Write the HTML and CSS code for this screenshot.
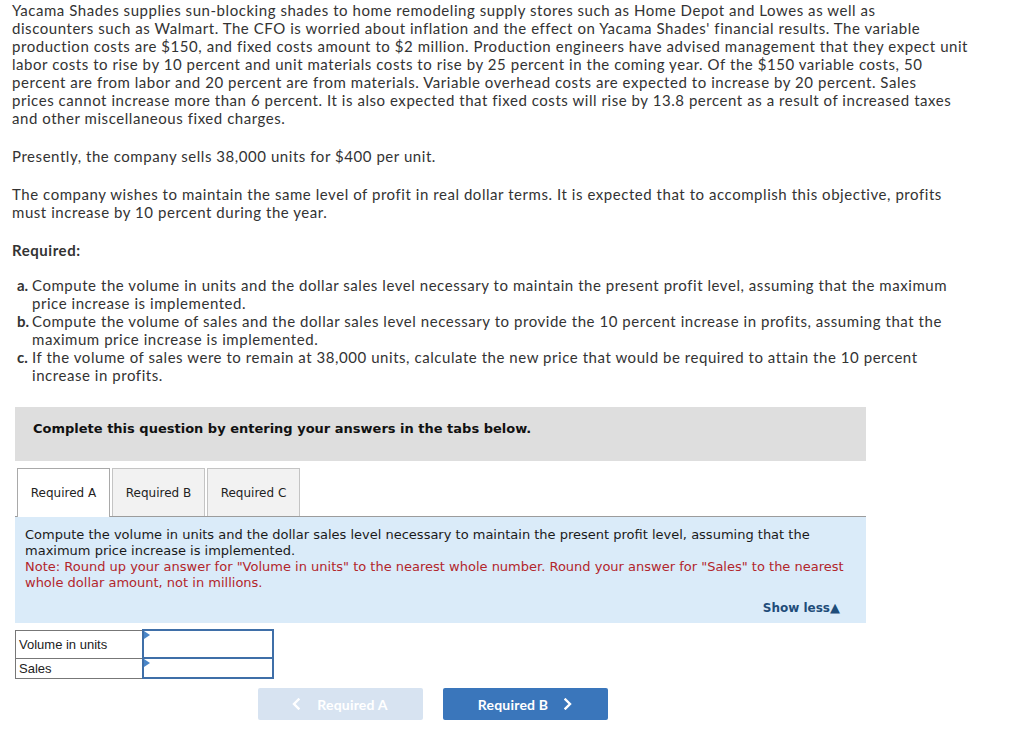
FILE: index.html
```html
<!DOCTYPE html>
<html>
<head>
<meta charset="utf-8">
<link rel="stylesheet" href="styles.css">
</head>
<body>
<div class="page">
  <div class="question">
    <p>Yacama Shades supplies sun-blocking shades to home remodeling supply stores such as Home Depot and Lowes as well as<br>
    discounters such as Walmart. The CFO is worried about inflation and the effect on Yacama Shades' financial results. The variable<br>
    production costs are $150, and fixed costs amount to $2 million. Production engineers have advised management that they expect unit<br>
    labor costs to rise by 10 percent and unit materials costs to rise by 25 percent in the coming year. Of the $150 variable costs, 50<br>
    percent are from labor and 20 percent are from materials. Variable overhead costs are expected to increase by 20 percent. Sales<br>
    prices cannot increase more than 6 percent. It is also expected that fixed costs will rise by 13.8 percent as a result of increased taxes<br>
    and other miscellaneous fixed charges.</p>
    <p>Presently, the company sells 38,000 units for $400 per unit.</p>
    <p>The company wishes to maintain the same level of profit in real dollar terms. It is expected that to accomplish this objective, profits must increase by 10 percent during the year.</p>
    <p class="req-title">Required:</p>
    <ol class="req-list">
      <li><b>a.</b>Compute the volume in units and the dollar sales level necessary to maintain the present profit level, assuming that the maximum price increase is implemented.</li>
      <li><b>b.</b>Compute the volume of sales and the dollar sales level necessary to provide the 10 percent increase in profits, assuming that the maximum price increase is implemented.</li>
      <li><b>c.</b>If the volume of sales were to remain at 38,000 units, calculate the new price that would be required to attain the 10 percent increase in profits.</li>
    </ol>
  </div>

  <div class="work">
    <div class="banner">Complete this question by entering your answers in the tabs below.</div>
    <div class="tabs">
      <div class="tab active">Required A</div>
      <div class="tab">Required B</div>
      <div class="tab">Required C</div>
    </div>
    <div class="panel">
      <div class="instr">Compute the volume in units and the dollar sales level necessary to maintain the present profit level, assuming that the maximum price increase is implemented.</div>
      <div class="note">Note: Round up your answer for "Volume in units" to the nearest whole number. Round your answer for "Sales" to the nearest whole dollar amount, not in millions.</div>
      <div class="showless">Show less<span class="tri">&#9650;</span></div>
    </div>
    <table class="answers">
      <tr class="row1"><td class="label">Volume in units</td><td class="input"><span class="flag"></span></td></tr>
      <tr class="row2"><td class="label">Sales</td><td class="input"><span class="flag"></span></td></tr>
    </table>
    <div class="nav">
      <div class="btn prev"><svg class="chev" width="8" height="12" viewBox="0 0 8 12"><polyline points="6.5,1.5 2,6 6.5,10.5" fill="none" stroke="#fff" stroke-width="2.4" stroke-linecap="square"/></svg>Required A</div>
      <div class="btn next">Required B<svg class="chev" width="8" height="12" viewBox="0 0 8 12"><polyline points="1.5,1.5 6,6 1.5,10.5" fill="none" stroke="#fff" stroke-width="2.4" stroke-linecap="square"/></svg></div>
    </div>
  </div>
</div>
</body>
</html>
```

FILE: styles.css
```css
html, body {
  margin: 0;
  padding: 0;
  background: #fff;
}

.page {
  width: 1020px;
}

.question {
  padding: 1px 0 0 12px;
  width: 945px;
  font-family: Lato, "Open Sans", sans-serif;
  font-size: 15px;
  letter-spacing: 0.55px;
  line-height: 18px;
  color: #333;
}

.question p {
  margin: 0 0 20px 0;
}

.question p:first-child {
  width: 985px;
  white-space: nowrap;
}

.question p.req-title {
  font-weight: 700;
  margin-bottom: 17px;
}

.req-list {
  list-style: none;
  margin: 0;
  padding: 0 0 0 20px;
}

.req-list li {
  text-indent: -15px;
}

.req-list b {
  display: inline-block;
  width: 15px;
  text-indent: 0;
  font-weight: 700;
  letter-spacing: 0;
}

.work {
  margin: 23px 0 0 15px;
  width: 851px;
}

.banner {
  background: #dedede;
  height: 54px;
  box-sizing: border-box;
  padding: 14px 18px 0 18px;
  font-family: "DejaVu Sans", Verdana, sans-serif;
  font-weight: 700;
  font-size: 13px;
  line-height: 16px;
  color: #111;
}

.tabs {
  display: flex;
  gap: 2px;
  margin: 7px 0 0 2px;
  position: relative;
  z-index: 1;
}

.tab {
  width: 93px;
  height: 48px;
  box-sizing: border-box;
  border: 1px solid #c4c4c4;
  border-bottom: none;
  background: #f2f2f2;
  font-family: "DejaVu Sans", Verdana, sans-serif;
  font-size: 12px;
  line-height: 48px;
  text-align: center;
  color: #222;
}

.tab.active {
  background: #fff;
  border-color: #a9a9a9;
  height: 49px;
}

.panel {
  background: #daebf9;
  border-top: 1px solid #9c9c9c;
  margin-top: -1px;
  padding: 10px 10px 7px 10px;
  font-family: "DejaVu Sans", Verdana, sans-serif;
  font-size: 13px;
  line-height: 16px;
  color: #1a1a1a;
}

.note {
  color: #b2262c;
}

.showless {
  text-align: right;
  margin: 9px 16px 0 0;
  font-weight: 700;
  font-size: 12px;
  color: #1f4d7a;
}

.tri {
  font-size: 13px;
  line-height: 16px;
  margin-left: 0;
}

.answers {
  margin-top: 6px;
  border-collapse: collapse;
  font-family: "Liberation Sans", Arial, sans-serif;
  font-size: 13px;
  line-height: 15px;
  color: #222;
}

.answers td {
  padding: 0;
}

.answers td.label {
  border: 1px solid #777;
  width: 123px;
  padding-left: 3px;
}

.row1 td { height: 26px; }
.row2 td { height: 18px; }

.answers td.input {
  width: 128px;
  border: 2px solid #3f6fa8;
  position: relative;
  vertical-align: top;
  background: #fff;
}

.flag {
  position: absolute;
  left: 0;
  top: 0;
  width: 0;
  height: 0;
  border-top: 4px solid transparent;
  border-bottom: 4px solid transparent;
  border-left: 6px solid #4a86c8;
}

.nav {
  display: flex;
  justify-content: center;
  gap: 20px;
  margin-top: 9px;
  padding-right: 16px;
}

.btn {
  width: 165px;
  height: 32px;
  border-radius: 2px;
  display: flex;
  align-items: center;
  justify-content: center;
  font-family: Lato, "Open Sans", sans-serif;
  font-weight: 700;
  font-size: 14px;
  letter-spacing: 0.2px;
  color: #fff;
}

.btn.prev {
  background: #d7e3f1;
}

.btn.next {
  background: #3a76bb;
}

.chev {
  display: block;
}

.prev .chev { margin-right: 17px; }
.next .chev { margin-left: 16px; }
```
